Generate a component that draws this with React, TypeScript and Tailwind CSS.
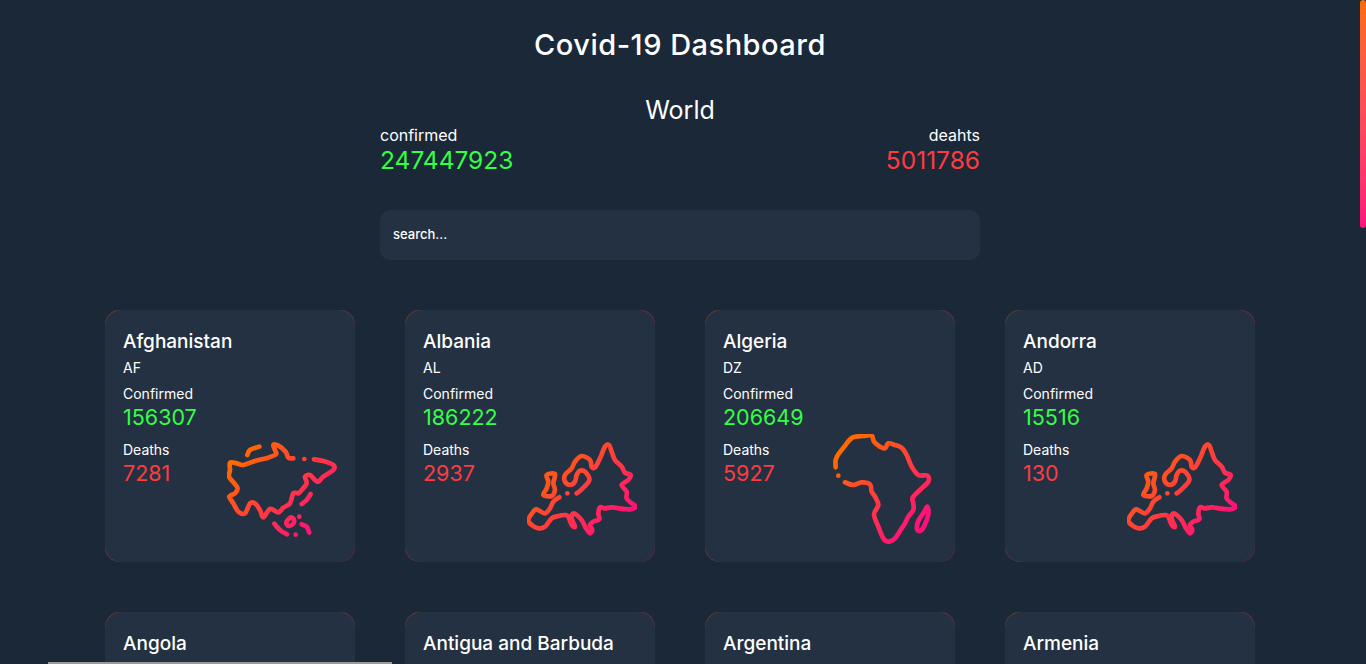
import { useId } from 'react';

type Point = [number, number];
type Stroke = { points: Point[]; closed?: boolean };
type Shape = { box: string; strokes: Stroke[]; dots: Point[] };

// traced by hand, coordinates are 3x the drawn size
const europe: Shape = {
  box: '51 12 330 330',
  dots: [[172, 190]],
  strokes: [
    {
      points: [[200, 190], [215, 178], [238, 150], [225, 125], [210, 122], [200, 135], [195, 155], [180, 165], [165, 155], [165, 135], [185, 115], [195, 95], [215, 78], [240, 90], [245, 110], [255, 112], [270, 85], [285, 50], [297, 45], [305, 65], [315, 90], [335, 110], [345, 128], [362, 135], [355, 150], [335, 165], [350, 185], [350, 205], [365, 220], [378, 230], [360, 238], [325, 235], [305, 232], [285, 235], [270, 232], [265, 250], [268, 268], [250, 275], [240, 285], [247, 300], [240, 310], [228, 295], [215, 270], [200, 255], [190, 250], [185, 265], [195, 290], [185, 285], [175, 260], [165, 255], [145, 258], [125, 265], [105, 290], [85, 295], [65, 285], [55, 270], [70, 245], [80, 238], [105, 250], [120, 235], [130, 215], [148, 202]],
    },
    { closed: true, points: [[110, 135], [135, 132], [130, 160], [135, 180], [125, 198], [100, 195], [110, 175], [115, 155]] },
  ],
};

const africa: Shape = {
  box: '21 27 330 330',
  dots: [[55, 152]],
  strokes: [
    {
      points: [[47, 127], [47, 105], [55, 88], [75, 62], [97, 38], [130, 33], [155, 32], [162, 50], [180, 65], [195, 70], [205, 55], [225, 60], [245, 68], [260, 90], [275, 125], [295, 150], [322, 152], [325, 170], [300, 195], [278, 218], [280, 235], [280, 255], [265, 275], [255, 295], [245, 310], [225, 340], [205, 350], [190, 340], [175, 305], [162, 268], [175, 240], [165, 215], [155, 200], [150, 178], [125, 172], [100, 180], [75, 172]],
    },
    { closed: true, points: [[322, 245], [325, 268], [312, 305], [300, 318], [291, 312], [295, 288], [311, 263]] },
  ],
};

const asia: Shape = {
  box: '36 -3 330 330',
  dots: [[268, 72], [242, 299], [253, 245]],
  strokes: [
    { points: [[97, 60], [105, 45], [133, 35]] },
    {
      points: [[235, 70], [220, 68], [212, 50], [190, 32], [175, 30], [180, 45], [183, 58], [160, 68], [120, 78], [85, 90], [65, 85], [45, 83], [45, 105], [42, 125], [58, 145], [68, 160], [60, 175], [43, 185], [55, 205], [70, 230], [90, 235], [105, 205], [120, 205], [135, 225], [145, 247], [165, 222], [190, 232], [205, 218], [225, 205], [235, 175], [250, 175], [260, 165], [275, 145], [270, 125], [285, 120], [300, 135], [310, 140], [325, 125], [355, 105], [355, 90], [325, 78], [297, 73]],
    },
    { points: [[260, 207], [275, 195], [287, 177]] },
    { points: [[178, 266], [195, 285], [216, 298]] },
    { points: [[260, 268], [275, 275], [283, 293]] },
    { closed: true, points: [[214, 262], [228, 247], [237, 255], [234, 267], [221, 273]] },
  ],
};

// catmull-rom through the traced points
function toPath({ points, closed }: Stroke) {
  const n = points.length;
  const at = (i: number) => (closed ? points[(i + n) % n] : points[Math.max(0, Math.min(n - 1, i))]);
  let d = `M${points[0][0]} ${points[0][1]}`;
  for (let i = 0; i < (closed ? n : n - 1); i++) {
    const [p0, p1, p2, p3] = [at(i - 1), at(i), at(i + 1), at(i + 2)];
    const c1 = [p1[0] + (p2[0] - p0[0]) / 6, p1[1] + (p2[1] - p0[1]) / 6];
    const c2 = [p2[0] - (p3[0] - p1[0]) / 6, p2[1] - (p3[1] - p1[1]) / 6];
    d += `C${c1[0]} ${c1[1]} ${c2[0]} ${c2[1]} ${p2[0]} ${p2[1]}`;
  }
  return closed ? d + 'Z' : d;
}

function Continent({ shape }: { shape: Shape }) {
  const id = useId();
  const [x, y, w, h] = shape.box.split(' ').map(Number);
  return (
    <svg viewBox={shape.box} className="absolute right-[18px] bottom-[18px] h-[110px] w-[110px]" fill="none">
      <defs>
        <linearGradient id={id} gradientUnits="userSpaceOnUse" x1={x} y1={y} x2={x + w} y2={y + h}>
          <stop offset="0.15" stopColor="#ff6a00" />
          <stop offset="0.85" stopColor="#ff0f7b" />
        </linearGradient>
      </defs>
      {shape.strokes.map((s, i) => (
        <path key={i} d={toPath(s)} stroke={`url(#${id})`} strokeWidth="14" strokeLinecap="round" strokeLinejoin="round" />
      ))}
      {shape.dots.map(([cx, cy], i) => (
        <circle key={i} cx={cx} cy={cy} r="7" fill={`url(#${id})`} />
      ))}
    </svg>
  );
}

const countries = [
  { name: 'Afghanistan', code: 'AF', confirmed: 156307, deaths: 7281, shape: asia },
  { name: 'Albania', code: 'AL', confirmed: 186222, deaths: 2937, shape: europe },
  { name: 'Algeria', code: 'DZ', confirmed: 206649, deaths: 5927, shape: africa },
  { name: 'Andorra', code: 'AD', confirmed: 15516, deaths: 130, shape: europe },
  { name: 'Angola', code: 'AO', confirmed: 64000, deaths: 1700, shape: africa },
  { name: 'Antigua and Barbuda', code: 'AG', confirmed: 4000, deaths: 100, shape: europe },
  { name: 'Argentina', code: 'AR', confirmed: 5280000, deaths: 115000, shape: europe },
  { name: 'Armenia', code: 'AM', confirmed: 310000, deaths: 6500, shape: asia },
];

function CountryCard({ country }: { country: (typeof countries)[number] }) {
  return (
    <div className="h-[252px] w-[250px] rounded-[15px] bg-linear-to-br from-[#a04a20] to-[#a01a55]">
      <div className="relative h-full rounded-[16px] bg-[#243142] px-[18px] pt-[20px]">
        <h2 className="text-[19px] leading-[24px] font-medium">{country.name}</h2>
        <p className="mt-[3px] text-[14px] leading-[21px]">{country.code}</p>
        <p className="mt-[6px] text-[14px] leading-[20px]">Confirmed</p>
        <p className="text-[21.5px] leading-[26px] text-[#33ff44]">{country.confirmed}</p>
        <p className="mt-[10px] text-[14px] leading-[20px]">Deaths</p>
        <p className="text-[21.5px] leading-[26px] text-[#ff3b3f]">{country.deaths}</p>
        <Continent shape={country.shape} />
      </div>
    </div>
  );
}

export default function App() {
  return (
    <div className="h-screen overflow-hidden bg-[#1b2838] pr-[6px] font-['Inter','Liberation_Sans',sans-serif] text-white">
      <h1 className="pt-[24px] text-center text-[29px] leading-[42px] font-medium tracking-[0.5px]">Covid-19 Dashboard</h1>
      <h2 className="mt-[27px] text-center text-[25px] leading-[34px]">World</h2>
      <div className="mx-auto flex w-[600px] justify-between">
        <div>
          <p className="text-[16px] leading-[16px]">confirmed</p>
          <p className="text-[24.5px] leading-[34px] text-[#33ff44]">247447923</p>
        </div>
        <div className="text-right">
          <p className="text-[16px] leading-[16px]">deahts</p>
          <p className="text-[24.5px] leading-[34px] text-[#ff3b3f]">5011786</p>
        </div>
      </div>
      <input
        placeholder="search..."
        className="mx-auto mt-[33px] block h-[50px] w-[600px] rounded-[10px] bg-[#243142] px-[13px] pb-[2px] text-[13px] font-medium outline-none placeholder:text-white"
      />
      <div className="mx-auto mt-[50px] flex w-[1150px] flex-wrap gap-[50px]">
        {countries.map((c) => (
          <CountryCard key={c.code} country={c} />
        ))}
      </div>
      <div className="fixed top-0 right-0 h-[228px] w-[6px] rounded-[3px] bg-linear-to-b from-[#ff6a00] to-[#ff0f7b]" />
      <div className="fixed bottom-0 left-[48px] h-[2px] w-[344px] bg-[#9a9a9a]" />
    </div>
  );
}
